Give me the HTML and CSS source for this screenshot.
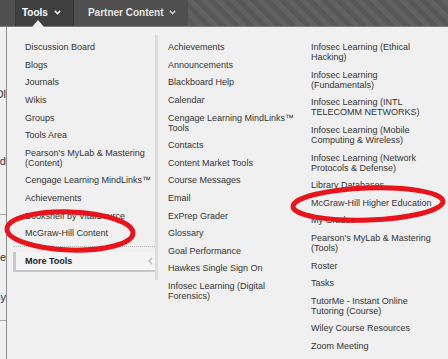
FILE: index.html
```html
<!DOCTYPE html>
<html>
<head>
    <title>Tools</title>
    <link rel="stylesheet" href="styles.css">
</head>
<body>
    <div class="topbar">
        <div class="nav">
            <div class="nav-tab active">Tools
                <svg class="chev" width="7" height="5" viewBox="0 0 7 5"><polyline points="0.8,0.9 3.5,3.6 6.2,0.9"/></svg>
            </div>
            <div class="nav-tab">Partner Content
                <svg class="chev" width="7" height="5" viewBox="0 0 7 5"><polyline points="0.8,0.9 3.5,3.6 6.2,0.9"/></svg>
            </div>
        </div>
    </div>

    <div class="page">
        <div class="behind">
            <div class="frag f1"><span>Ol</span></div>
            <div class="frag f2"><span>ed</span></div>
            <div class="rule r1"></div>
            <div class="frag f3"><span>e</span></div>
            <div class="frag f4"><span>Sy</span></div>
            <div class="rule r2"></div>
        </div>

        <div class="menu">
            <div class="fav-col">
                <ul class="tool-list">
                    <li>Discussion Board</li>
                    <li>Blogs</li>
                    <li>Journals</li>
                    <li>Wikis</li>
                    <li>Groups</li>
                    <li>Tools Area</li>
                    <li>Pearson's MyLab &amp; Mastering (Content)</li>
                    <li>Cengage Learning MindLinks™</li>
                    <li>Achievements</li>
                    <li>Bookshelf by VitalSource</li>
                    <li>McGraw-Hill Content</li>
                </ul>
                <div class="divider"></div>
                <div class="more-tools">
                    <span>More Tools</span>
                    <svg width="5" height="8" viewBox="0 0 5 8"><polyline points="4,0.8 1,4 4,7.2"/></svg>
                </div>
            </div>

            <ul class="tool-list mid">
                <li>Achievements</li>
                <li>Announcements</li>
                <li>Blackboard Help</li>
                <li>Calendar</li>
                <li>Cengage Learning MindLinks™ Tools</li>
                <li>Contacts</li>
                <li>Content Market Tools</li>
                <li>Course Messages</li>
                <li>Email</li>
                <li>ExPrep Grader</li>
                <li>Glossary</li>
                <li>Goal Performance</li>
                <li>Hawkes Single Sign On</li>
                <li>Infosec Learning (Digital Forensics)</li>
            </ul>

            <ul class="tool-list right">
                <li>Infosec Learning (Ethical Hacking)</li>
                <li>Infosec Learning (Fundamentals)</li>
                <li>Infosec Learning (INTL TELECOMM NETWORKS)</li>
                <li>Infosec Learning (Mobile Computing &amp; Wireless)</li>
                <li>Infosec Learning (Network Protocols &amp; Defense)</li>
                <li>Library Databases</li>
                <li>McGraw-Hill Higher Education</li>
                <li>My Grades</li>
                <li>Pearson's MyLab &amp; Mastering (Tools)</li>
                <li>Roster</li>
                <li>Tasks</li>
                <li>TutorMe - Instant Online Tutoring (Course)</li>
                <li>Wiley Course Resources</li>
                <li>Zoom Meeting</li>
            </ul>
        </div>
    </div>

    <!-- red marker circles drawn over the screenshot -->
    <svg class="marks" width="448" height="359" viewBox="0 0 448 359">
        <ellipse cx="70" cy="231" rx="63" ry="19" transform="rotate(2 70 231)"/>
        <ellipse cx="368" cy="204" rx="75" ry="16" transform="rotate(-2 368 204)"/>
    </svg>
</body>
</html>
```

FILE: styles.css
```css
body {
    margin: 0;
    font-family: "Liberation Sans", Arial, sans-serif;
    background-color: #f0f0f0;
    overflow: hidden;
    position: relative;
}

.topbar {
    display: flex;
    height: 26px;
    border-bottom: 1px solid #7c7c7c;
    background: repeating-linear-gradient(45deg, #606060 0 5px, #585858 5px 10px);
}

.nav {
    display: flex;
    padding-left: 15px;
    background-color: #4f4f4f;
}

.nav-tab {
    display: flex;
    align-items: center;
    gap: 5px;
    padding: 0 12px 2px 14px;
    color: #e6e6e6;
    font-size: 10px;
    font-weight: bold;
}

.nav-tab.active {
    position: relative;
    gap: 6px;
    padding-left: 6px;
    color: #fff;
    background-color: #3f3f3f;
    border-left: 1px solid #383838;
    border-right: 1px solid #383838;
}

/* little notch under the open tab */
.nav-tab.active::after {
    content: "";
    position: absolute;
    left: 16px;
    bottom: -1px;
    border-left: 6px solid transparent;
    border-right: 6px solid transparent;
    border-bottom: 7px solid #f0f0f0;
}

.chev polyline {
    fill: none;
    stroke: #c8c8c8;
    stroke-width: 1.5;
}

.nav-tab.active .chev polyline {
    stroke: #f0f0f0;
}

.page {
    display: flex;
    height: 332px;
}

.behind {
    width: 6px;
    overflow: hidden;
    display: flex;
    flex-direction: column;
    font-size: 11px;
    line-height: 13px;
    color: #333;
}

.frag {
    display: flex;
    justify-content: flex-end;
    white-space: nowrap;
}

.frag span {
    flex-shrink: 0;
}

.f1 { margin-top: 61px; }
.f2 { margin-top: 54px; }
.f3 { margin-top: 36px; }
.f4 { margin-top: 27px; }

.rule {
    height: 1px;
    background-color: #a8a8a8;
}

.r1 { margin-top: 46px; }
.r2 { margin-top: 16px; }

.menu {
    flex: 1;
    display: flex;
    align-items: flex-start;
    padding-top: 8px;
    border-left: 1px solid #8d8d8d;
}

.fav-col {
    width: 148px;
    padding-bottom: 8px;
    border-right: 3px solid #dcdcdc;
}

.tool-list {
    list-style: none;
    margin: 0;
    padding: 3.5px 0 0 18px;
}

.tool-list li {
    font-size: 9px;
    line-height: 10px;
    padding: 3.8px 0;
    color: #333;
}

.tool-list.mid {
    width: 135px;
    padding-left: 10px;
}

.tool-list.right {
    width: 125px;
    padding-left: 8px;
}

.divider {
    margin: 4px 0 0 6px;
    border-top: 1px dotted #b8b8b8;
}

.more-tools {
    display: flex;
    justify-content: space-between;
    align-items: center;
    margin: 5px 0 0 6px;
    padding: 4px 2px 4px 9px;
    font-size: 9px;
    line-height: 10px;
    font-weight: bold;
    color: #22222e;
    background-color: #f4f4f4;
    border-left: 3px solid #c8c8c8;
    border-bottom: 2px solid #c8c8c8;
}

.more-tools polyline {
    fill: none;
    stroke: #b0b0b0;
    stroke-width: 1.2;
}

.marks {
    position: absolute;
    top: 0;
    left: 0;
    pointer-events: none;
}

.marks ellipse {
    fill: none;
    stroke: #e8131b;
    stroke-width: 5;
}
```
